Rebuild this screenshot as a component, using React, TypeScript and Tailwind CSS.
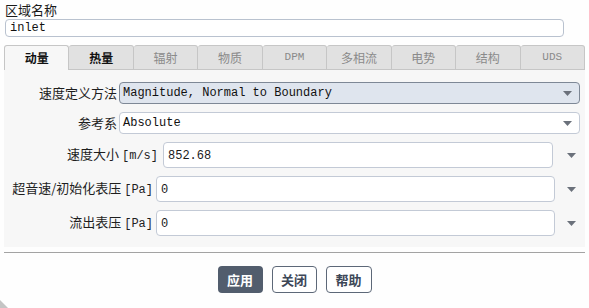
import React from "react";

const CJK = "font-['Noto_Sans_CJK_SC','Noto_Sans',sans-serif]";
const MONO = "font-['Liberation_Mono','Noto_Sans_CJK_SC',monospace]";

function Arrow({ className = "" }: { className?: string }) {
  return (
    <svg width="9" height="5" viewBox="0 0 9 5" className={className}>
      <polygon points="0,0 9,0 4.5,5" fill="#6b717b" />
    </svg>
  );
}

const tabs: { label: string; mono?: boolean; state: "active" | "bold" | "dim" }[] = [
  { label: "动量", state: "active" },
  { label: "热量", state: "bold" },
  { label: "辐射", state: "dim" },
  { label: "物质", state: "dim" },
  { label: "DPM", mono: true, state: "dim" },
  { label: "多相流", state: "dim" },
  { label: "电势", state: "dim" },
  { label: "结构", state: "dim" },
  { label: "UDS", mono: true, state: "dim" },
];

function Label({ cjk, unit, width }: { cjk: string; unit?: string; width: string }) {
  return (
    <div className={`${width} shrink-0 text-right text-[13px] leading-[16px] text-[#1e1e1e] whitespace-nowrap`}>
      <span className={CJK}>{cjk}</span>
      {unit && (
        <>
          <span> </span>
          <span className={`${MONO} text-[12px]`}>{unit}</span>
        </>
      )}
    </div>
  );
}

function NumRow({ cjk, unit, width, gap, value }: { cjk: string; unit: string; width: string; gap: string; value: string }) {
  return (
    <div className={`flex items-center h-[26px] ${gap}`}>
      <Label cjk={cjk} unit={unit} width={width} />
      <div className="grow min-w-0 h-[26px] bg-white border border-[#c3cad6] rounded-[4px] flex items-center pl-[4px]">
        <span className={`${MONO} text-[12px] text-[#1a1a1a] pt-[2px]`}>{value}</span>
      </div>
      <div className="w-[27px] shrink-0 flex items-center justify-start pl-[9px]">
        <Arrow />
      </div>
    </div>
  );
}

export default function App() {
  return (
    <div className={`relative w-[589px] h-[308px] bg-[#fefefe] overflow-hidden ${CJK}`}>
      <div className="px-[5px] pt-[2px]">
        <div className="text-[13px] leading-[16px] text-[#1a1a1a]">区域名称</div>
        <div className="mt-[1px] h-[18px] w-[559px] bg-white border border-[#b9c2cf] rounded-[4px] flex items-center pl-[4px]">
          <span className={`${MONO} text-[12px] text-[#111]`}>inlet</span>
        </div>
      </div>

      <div className="mt-[8px] mx-[4px] flex h-[25px]">
        {tabs.map((t, i) => (
          <div
            key={t.label}
            className={
              "flex-1 flex items-center justify-center border border-[#c6c6c6] rounded-t-[3px] " +
              (i > 0 ? "border-l-0 " : "") +
              (t.state === "active" ? "bg-[#f7f7f7] border-b-0" : "bg-[#e1e1e1]")
            }
          >
            <span
              className={
                (t.mono ? `${MONO} text-[11px] ` : "text-[12px] ") +
                (t.state === "dim" ? "text-[#8a8a8a]" : "text-[#111] font-bold")
              }
            >
              {t.label}
            </span>
          </div>
        ))}
      </div>

      <div className="mx-[4px] h-[177px] bg-[#f7f7f7] pt-[12px] flex flex-col gap-[8px]">
        <div className="flex items-center h-[22px] gap-[2px] pr-[5px]">
          <Label cjk="速度定义方法" width="w-[113px]" />
          <div className="flex-1 h-[22px] bg-[#dfe5ee] border border-[#7e8896] rounded-[4px] flex items-center pl-[3px] pr-[7px] justify-between">
            <span className={`${MONO} text-[12px] text-[#111]`}>Magnitude, Normal to Boundary</span>
            <Arrow />
          </div>
        </div>
        <div className="flex items-center h-[22px] gap-[2px] pr-[5px]">
          <Label cjk="参考系" width="w-[113px]" />
          <div className="flex-1 h-[22px] bg-white border border-[#c3cad6] rounded-[4px] flex items-center pl-[3px] pr-[7px] justify-between">
            <span className={`${MONO} text-[12px] text-[#111]`}>Absolute</span>
            <Arrow />
          </div>
        </div>
        <NumRow cjk="速度大小" unit="[m/s]" width="w-[154px]" gap="gap-[5px]" value="852.68" />
        <NumRow cjk="超音速/初始化表压" unit="[Pa]" width="w-[149px]" gap="gap-[3px]" value="0" />
        <NumRow cjk="流出表压" unit="[Pa]" width="w-[149px]" gap="gap-[3px]" value="0" />
      </div>

      <div className="mt-[5px] mx-[4px] h-[1px] bg-[#a3a3a3]" />

      <div className="mt-[13px] flex justify-center gap-[9px]">
        <button className="w-[45px] h-[27px] rounded-[4px] bg-[#525d6d] text-white text-[13px] font-bold">应用</button>
        <button className="w-[45px] h-[27px] rounded-[4px] border border-[#5d6878] bg-white text-[#3d4757] text-[13px] font-bold">关闭</button>
        <button className="w-[46px] h-[27px] rounded-[4px] border border-[#5d6878] bg-white text-[#3d4757] text-[13px] font-bold">帮助</button>
      </div>

      <svg className="absolute left-0 bottom-0" width="8" height="8" viewBox="0 0 8 8">
        <polygon points="0,0 0,8 8,8" fill="#c4c4c4" />
      </svg>
    </div>
  );
}
